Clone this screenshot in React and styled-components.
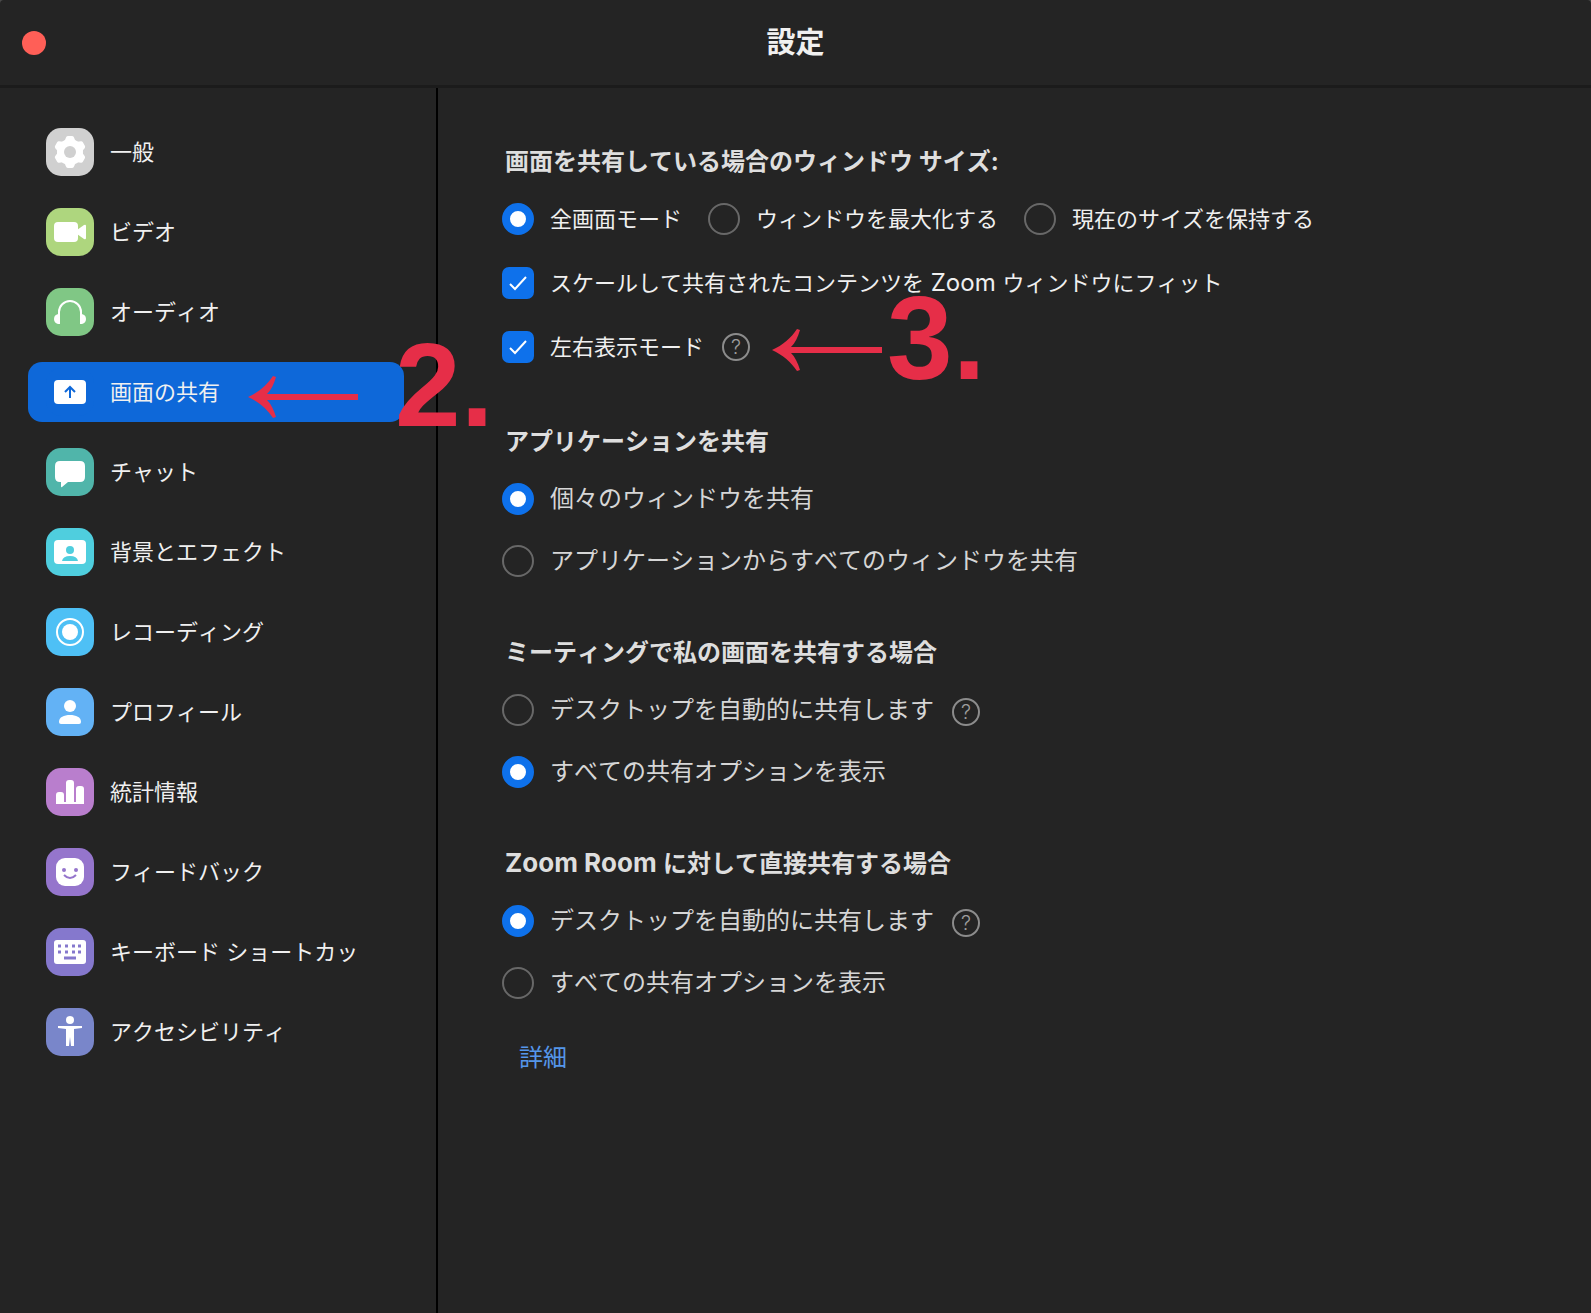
import { useState } from "react";
import styled, { createGlobalStyle } from "styled-components";

const GlobalStyle = createGlobalStyle`
  * {
    box-sizing: border-box;
  }
  body {
    margin: 0;
    background: #4a4a4a;
    font-family: Inter, "Noto Sans CJK JP", sans-serif;
    font-kerning: none;
  }
`;

const Window = styled.div`
  display: flex;
  flex-direction: column;
  min-height: 100vh;
  background: #242424;
  border-radius: 4px 4px 0 0;
  color: #f0f0f0;
`;

const TitleBar = styled.header`
  display: grid;
  grid-template-columns: 1fr auto 1fr;
  align-items: center;
  height: 88px;
  padding: 0 22px;
  border-bottom: 3px solid #1b1b1b;
`;

const CloseButton = styled.button`
  width: 24px;
  height: 24px;
  padding: 0;
  border: none;
  border-radius: 50%;
  background: #ff5f57;
`;

const Title = styled.h1`
  margin: 0;
  font-size: 29px;
  line-height: 40px;
  font-weight: 700;
`;

const Body = styled.div`
  display: flex;
  flex: 1;
`;

const Sidebar = styled.nav`
  position: relative;
  z-index: 1;
  flex: 0 0 438px;
  display: flex;
  flex-direction: column;
  gap: 20px;
  padding: 34px 32px 34px 28px;
  border-right: 2px solid #000;
`;

const NavItem = styled.button`
  position: relative;
  display: flex;
  align-items: center;
  gap: 16px;
  height: 60px;
  padding: 0 18px;
  border: none;
  border-radius: 14px;
  background: ${(props) => (props.$active ? "#0e68d9" : "transparent")};
  color: inherit;
  font-family: inherit;
  font-kerning: inherit;
  font-size: 22px;
  line-height: 32px;
  text-align: left;
  white-space: nowrap;
`;

const IconTile = styled.span`
  display: block;
  flex: none;
  width: 48px;
  height: 48px;
  border-radius: 15px;
  background: ${(props) => props.$color};
  color: ${(props) => props.$color};

  svg {
    display: block;
  }
`;

const Content = styled.main`
  flex: 1;
  display: flex;
  flex-direction: column;
  gap: 60px;
  padding: 58px 64px;
`;

const Section = styled.section`
  display: flex;
  flex-direction: column;
  gap: ${(props) => props.$gap}px;
  padding-bottom: ${(props) => (props.$first ? "3px" : "0")};
  color: ${(props) => (props.$first ? "#f0f0f0" : "#d6d6d6")};
  font-size: ${(props) => (props.$first ? "22px" : "24px")};
`;

const Heading = styled.h2`
  margin: 0;
  padding: 0 3px;
  color: #dedede;
  font-size: 24px;
  line-height: 32px;
  font-weight: 700;
`;

const Group = styled.div`
  display: flex;
  flex-direction: column;
  gap: 25px;
`;

const Line = styled.div`
  position: relative;
  display: flex;
  flex-wrap: wrap;
  align-items: center;
  align-self: flex-start;
  column-gap: ${(props) => props.$gap || 18}px;
`;

const Option = styled.label`
  display: flex;
  align-items: center;
  gap: 16px;
  line-height: 32px;
`;

// latin words run a little larger than the kana beside them
const Latin = styled.span`
  font-family: Inter, sans-serif;
  font-size: ${(props) => props.$size}px;
  line-height: 24px;
`;

const Control = styled.span`
  display: grid;
  flex: none;
  width: 32px;
  height: 32px;

  > * {
    grid-area: 1 / 1;
  }
  svg {
    pointer-events: none;
  }
`;

const RadioInput = styled.input`
  appearance: none;
  width: 32px;
  height: 32px;
  margin: 0;
  border: 2px solid #686868;
  border-radius: 50%;

  &:checked {
    border: 8px solid #0e71eb;
    background: #fff;
  }
`;

const CheckInput = styled.input`
  appearance: none;
  width: 32px;
  height: 32px;
  margin: 0;
  border: 2px solid #686868;
  border-radius: 7px;

  &:checked {
    border-color: #0e71eb;
    background: #0e71eb;
  }
  &:not(:checked) + svg {
    visibility: hidden;
  }
`;

const HelpButton = styled.button`
  width: 28px;
  height: 28px;
  padding: 0;
  margin-top: ${(props) => (props.$low ? "4px" : "0")};
  border: 2px solid #8c8c8c;
  border-radius: 50%;
  background: transparent;
  color: #9c9c9c;
  font-family: inherit;
  font-size: 20px;
  font-weight: 300;
  line-height: 24px;
  text-align: center;
`;

const MoreLink = styled.a`
  align-self: flex-start;
  margin: -17px 0 0 17px;
  color: #5596ea;
  font-size: 24px;
  line-height: 32px;
  text-decoration: none;
`;

// step marker laid over the row it points at
const Marker = styled.span`
  position: absolute;
  left: ${(props) => props.$left}px;
  top: ${(props) => props.$top}px;
  display: flex;
  gap: ${(props) => props.$gap}px;
  color: #e62e48;
  pointer-events: none;

  svg {
    flex: none;
    margin-top: 41px;
  }
`;

const MarkerNumber = styled.span`
  font-family: "Liberation Sans", Arial, sans-serif;
  font-size: 118px;
  font-weight: 700;
  line-height: 100px;
`;

const Step = ({ number, left, top, gap }) => (
  <Marker $left={left} $top={top} $gap={gap}>
    <svg width="110" height="42" viewBox="0 0 110 42" fill="currentColor" aria-hidden="true">
      <path d="M0 21C11 16 19 9 25 0L28 1C26 8 23 14 19 18H110V24H19C23 28 26 34 28 41L25 42C19 33 11 26 0 21Z" />
    </svg>
    <MarkerNumber>{number}</MarkerNumber>
  </Marker>
);

const lobes = [0, 60, 120, 180, 240, 300];

const navItems = [
  {
    label: "一般",
    color: "#d0d0d0",
    icon: (
      <>
        <circle cx="24" cy="24" r="13" />
        {lobes.map((a) => (
          <path key={a} d="M17 14C20 13 19 8 22 8H26C29 8 28 13 31 14L28 22H20Z" transform={`rotate(${a} 24 24)`} />
        ))}
        <circle cx="24" cy="24" r="6" fill="currentColor" />
      </>
    ),
  },
  {
    label: "ビデオ",
    color: "#aed67e",
    icon: (
      <>
        <rect x="8" y="14" width="24" height="20" rx="4" />
        <path d="M31 22L38 17Q40 16 40 18V30Q40 32 38 31L31 26Z" />
      </>
    ),
  },
  {
    label: "オーディオ",
    color: "#80c785",
    icon: (
      <>
        <path d="M13 29V24A11 11 0 0 1 35 24V29" fill="none" stroke="#fff" strokeWidth="2" />
        <path d="M14 26V36H12Q8 35 8 31Q8 26 14 26ZM34 26V36H36Q40 35 40 31Q40 26 34 26Z" />
      </>
    ),
  },
  {
    label: "画面の共有",
    color: "#0e68d9",
    icon: (
      <>
        <rect x="8" y="12" width="32" height="24" rx="4" />
        <path d="M24 30V19M19 24L24 19L29 24" fill="none" stroke="currentColor" strokeWidth="2" />
      </>
    ),
  },
  {
    label: "チャット",
    color: "#50b5aa",
    icon: <path d="M14 13H34Q39 13 39 18V29Q39 34 34 34H22L16 39Q15 40 15 38V34H14Q9 34 9 29V18Q9 13 14 13Z" />,
  },
  {
    label: "背景とエフェクト",
    color: "#4fcede",
    icon: (
      <>
        <rect x="8" y="12" width="32" height="24" rx="4" />
        <circle cx="24" cy="22" r="4" fill="currentColor" />
        <path d="M16 33Q17 28 24 28T32 33Z" fill="currentColor" />
      </>
    ),
  },
  {
    label: "レコーディング",
    color: "#4ec0f5",
    icon: (
      <>
        <circle cx="24" cy="24" r="13" fill="none" stroke="#fff" strokeWidth="2" />
        <circle cx="24" cy="24" r="8" />
      </>
    ),
  },
  {
    label: "プロフィール",
    color: "#63b2f5",
    icon: (
      <>
        <circle cx="24" cy="18" r="6" />
        <path d="M13 34C13 29 18 27 24 27S35 29 35 34Q35 36 33 36H15Q13 36 13 34Z" />
      </>
    ),
  },
  {
    label: "統計情報",
    color: "#b97ecd",
    icon: (
      <path d="M10 36V27Q10 24 13 24H15Q18 24 18 27V34H20V15Q20 12 23 12H25Q28 12 28 15V34H30V21Q30 18 33 18H35Q38 18 38 21V36Z" />
    ),
  },
  {
    label: "フィードバック",
    color: "#9575cc",
    icon: (
      <>
        <rect x="10" y="10" width="28" height="28" rx="9" />
        <circle cx="18" cy="22" r="2" fill="currentColor" />
        <circle cx="30" cy="22" r="2" fill="currentColor" />
        <path d="M18 27Q24 33 30 27" fill="none" stroke="currentColor" strokeWidth="2" />
      </>
    ),
  },
  {
    label: "キーボード ショートカッ",
    color: "#8578cd",
    icon: (
      <>
        <rect x="8" y="12" width="32" height="24" rx="3" />
        <path
          d="M12 18H15M19 18H22M26 18H29M32 18H35M12 24H15M19 24H22M26 24H29M32 24H35M18 30H30"
          stroke="currentColor"
          strokeWidth="3"
        />
      </>
    ),
  },
  {
    label: "アクセシビリティ",
    color: "#7986ca",
    icon: (
      <>
        <circle cx="24" cy="12" r="4" />
        <path d="M12 18L24 18L36 18V20L28 21V38H25L24 29L23 38H20V21L12 20Z" />
      </>
    ),
  },
];

const Radio = ({ name, value, state, children }) => {
  const [current, setCurrent] = state;
  return (
    <Option>
      <RadioInput
        type="radio"
        name={name}
        checked={current === value}
        onChange={() => setCurrent(value)}
      />
      {children}
    </Option>
  );
};

const Check = ({ children }) => (
  <Option>
    <Control>
      <CheckInput type="checkbox" defaultChecked />
      <svg width="32" height="32" viewBox="0 0 32 32" fill="none" stroke="#fff" strokeWidth="2">
        <path d="M8 17L13 22L24 10" />
      </svg>
    </Control>
    <span>{children}</span>
  </Option>
);

const Help = ({ low }) => (
  <HelpButton type="button" $low={low}>
    ?
  </HelpButton>
);

export default function App() {
  const [page, setPage] = useState("画面の共有");
  const size = useState("full");
  const appShare = useState("single");
  const meeting = useState("all");
  const room = useState("auto");

  return (
    <>
      <GlobalStyle />
      <Window>
        <TitleBar>
          <CloseButton type="button" aria-label="閉じる" />
          <Title>設定</Title>
        </TitleBar>
        <Body>
          <Sidebar>
            {navItems.map((item) => (
              <NavItem
                key={item.label}
                type="button"
                $active={page === item.label}
                onClick={() => setPage(item.label)}
              >
                <IconTile $color={item.color}>
                  <svg width="48" height="48" viewBox="0 0 48 48" fill="#fff">
                    {item.icon}
                  </svg>
                </IconTile>
                {item.label}
                {item.label === "画面の共有" && <Step number="2." left={220} top={-27} gap={37} />}
              </NavItem>
            ))}
          </Sidebar>

          <Content>
            <Section $first $gap={32}>
              <Group>
                <Heading>画面を共有している場合のウィンドウ サイズ:</Heading>
                <Line $gap={26}>
                  <Radio name="size" value="full" state={size}>全画面モード</Radio>
                  <Radio name="size" value="max" state={size}>ウィンドウを最大化する</Radio>
                  <Radio name="size" value="keep" state={size}>現在のサイズを保持する</Radio>
                </Line>
              </Group>
              <Line>
                <Check>
                  スケールして共有されたコンテンツを<Latin $size={24}> Zoom </Latin>ウィンドウにフィット
                </Check>
              </Line>
              <Line>
                <Check>左右表示モード</Check>
                <Help />
                <Step number="3." left={270} top={-43} gap={5} />
              </Line>
            </Section>

            <Section $gap={30}>
              <Group>
                <Heading>アプリケーションを共有</Heading>
                <Radio name="app" value="single" state={appShare}>個々のウィンドウを共有</Radio>
              </Group>
              <Radio name="app" value="every" state={appShare}>
                アプリケーションからすべてのウィンドウを共有
              </Radio>
            </Section>

            <Section $gap={30}>
              <Group>
                <Heading>ミーティングで私の画面を共有する場合</Heading>
                <Line>
                  <Radio name="meeting" value="auto" state={meeting}>デスクトップを自動的に共有します</Radio>
                  <Help low />
                </Line>
              </Group>
              <Radio name="meeting" value="all" state={meeting}>すべての共有オプションを表示</Radio>
            </Section>

            <Section $gap={30}>
              <Group>
                <Heading>
                  <Latin $size={26}>Zoom Room </Latin>に対して直接共有する場合
                </Heading>
                <Line>
                  <Radio name="room" value="auto" state={room}>デスクトップを自動的に共有します</Radio>
                  <Help low />
                </Line>
              </Group>
              <Radio name="room" value="all" state={room}>すべての共有オプションを表示</Radio>
            </Section>

            <MoreLink href="#details">詳細</MoreLink>
          </Content>
        </Body>
      </Window>
    </>
  );
}
